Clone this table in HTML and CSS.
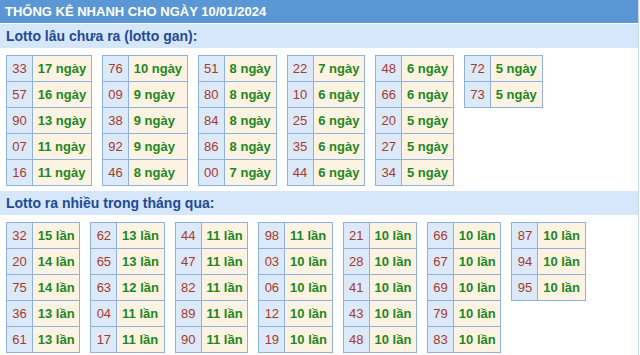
FILE: index.html
```html
<!DOCTYPE html>
<html lang="vi">
<head>
<meta charset="utf-8">
<title>Thống kê nhanh</title>
<link rel="stylesheet" href="styles.css">
</head>
<body>
<div class="box">
  <div class="header">THỐNG KÊ NHANH CHO NGÀY 10/01/2024</div>

  <div class="section-title">Lotto lâu chưa ra (lotto gan):</div>
  <div class="tables first">
    <table class="stat"><tbody>
      <tr><td class="num">33</td><td class="val">17 ngày</td></tr>
      <tr><td class="num">57</td><td class="val">16 ngày</td></tr>
      <tr><td class="num">90</td><td class="val">13 ngày</td></tr>
      <tr><td class="num">07</td><td class="val">11 ngày</td></tr>
      <tr><td class="num">16</td><td class="val">11 ngày</td></tr>
    </tbody></table>
    <table class="stat"><tbody>
      <tr><td class="num">76</td><td class="val">10 ngày</td></tr>
      <tr><td class="num">09</td><td class="val">9 ngày</td></tr>
      <tr><td class="num">38</td><td class="val">9 ngày</td></tr>
      <tr><td class="num">92</td><td class="val">9 ngày</td></tr>
      <tr><td class="num">46</td><td class="val">8 ngày</td></tr>
    </tbody></table>
    <table class="stat"><tbody>
      <tr><td class="num">51</td><td class="val">8 ngày</td></tr>
      <tr><td class="num">80</td><td class="val">8 ngày</td></tr>
      <tr><td class="num">84</td><td class="val">8 ngày</td></tr>
      <tr><td class="num">86</td><td class="val">8 ngày</td></tr>
      <tr><td class="num">00</td><td class="val">7 ngày</td></tr>
    </tbody></table>
    <table class="stat"><tbody>
      <tr><td class="num">22</td><td class="val">7 ngày</td></tr>
      <tr><td class="num">10</td><td class="val">6 ngày</td></tr>
      <tr><td class="num">25</td><td class="val">6 ngày</td></tr>
      <tr><td class="num">35</td><td class="val">6 ngày</td></tr>
      <tr><td class="num">44</td><td class="val">6 ngày</td></tr>
    </tbody></table>
    <table class="stat"><tbody>
      <tr><td class="num">48</td><td class="val">6 ngày</td></tr>
      <tr><td class="num">66</td><td class="val">6 ngày</td></tr>
      <tr><td class="num">20</td><td class="val">5 ngày</td></tr>
      <tr><td class="num">27</td><td class="val">5 ngày</td></tr>
      <tr><td class="num">34</td><td class="val">5 ngày</td></tr>
    </tbody></table>
    <table class="stat"><tbody>
      <tr><td class="num">72</td><td class="val">5 ngày</td></tr>
      <tr><td class="num">73</td><td class="val">5 ngày</td></tr>
    </tbody></table>
  </div>

  <div class="section-title">Lotto ra nhiều trong tháng qua:</div>
  <div class="tables">
    <table class="stat"><tbody>
      <tr><td class="num">32</td><td class="val">15 lần</td></tr>
      <tr><td class="num">20</td><td class="val">14 lần</td></tr>
      <tr><td class="num">75</td><td class="val">14 lần</td></tr>
      <tr><td class="num">36</td><td class="val">13 lần</td></tr>
      <tr><td class="num">61</td><td class="val">13 lần</td></tr>
    </tbody></table>
    <table class="stat"><tbody>
      <tr><td class="num">62</td><td class="val">13 lần</td></tr>
      <tr><td class="num">65</td><td class="val">13 lần</td></tr>
      <tr><td class="num">63</td><td class="val">12 lần</td></tr>
      <tr><td class="num">04</td><td class="val">11 lần</td></tr>
      <tr><td class="num">17</td><td class="val">11 lần</td></tr>
    </tbody></table>
    <table class="stat"><tbody>
      <tr><td class="num">44</td><td class="val">11 lần</td></tr>
      <tr><td class="num">47</td><td class="val">11 lần</td></tr>
      <tr><td class="num">82</td><td class="val">11 lần</td></tr>
      <tr><td class="num">89</td><td class="val">11 lần</td></tr>
      <tr><td class="num">90</td><td class="val">11 lần</td></tr>
    </tbody></table>
    <table class="stat"><tbody>
      <tr><td class="num">98</td><td class="val">11 lần</td></tr>
      <tr><td class="num">03</td><td class="val">10 lần</td></tr>
      <tr><td class="num">06</td><td class="val">10 lần</td></tr>
      <tr><td class="num">12</td><td class="val">10 lần</td></tr>
      <tr><td class="num">19</td><td class="val">10 lần</td></tr>
    </tbody></table>
    <table class="stat"><tbody>
      <tr><td class="num">21</td><td class="val">10 lần</td></tr>
      <tr><td class="num">28</td><td class="val">10 lần</td></tr>
      <tr><td class="num">41</td><td class="val">10 lần</td></tr>
      <tr><td class="num">43</td><td class="val">10 lần</td></tr>
      <tr><td class="num">48</td><td class="val">10 lần</td></tr>
    </tbody></table>
    <table class="stat"><tbody>
      <tr><td class="num">66</td><td class="val">10 lần</td></tr>
      <tr><td class="num">67</td><td class="val">10 lần</td></tr>
      <tr><td class="num">69</td><td class="val">10 lần</td></tr>
      <tr><td class="num">79</td><td class="val">10 lần</td></tr>
      <tr><td class="num">83</td><td class="val">10 lần</td></tr>
    </tbody></table>
    <table class="stat"><tbody>
      <tr><td class="num">87</td><td class="val">10 lần</td></tr>
      <tr><td class="num">94</td><td class="val">10 lần</td></tr>
      <tr><td class="num">95</td><td class="val">10 lần</td></tr>
    </tbody></table>
  </div>
</div>
</body>
</html>
```

FILE: styles.css
```css
html, body {
  margin: 0;
  padding: 0;
  background: #ffffff;
}

body {
  font-family: "Liberation Sans", Arial, sans-serif;
}

.box {
  width: 638px;
  border-right: 1px solid #c9d9ec;
  min-height: 355px;
}

.header {
  height: 23px;
  line-height: 23px;
  padding-left: 5px;
  background: #5b97d4;
  color: #ffffff;
  font-size: 13px;
  font-weight: bold;
}

.section-title {
  margin-top: 1px;
  height: 24px;
  line-height: 24px;
  padding-left: 6px;
  background: #d6e7fb;
  color: #1f4b95;
  font-size: 14px;
  font-weight: bold;
}

.tables {
  display: flex;
  align-items: flex-start;
  gap: 10px;
  padding: 7px 6px 4px 6px;
}

.stat {
  border-collapse: collapse;
  font-size: 13px;
}

.stat td {
  height: 25px;
  padding: 0 4.75px;
  border: 1px solid #8eb1e0;
  white-space: nowrap;
}

.stat .num {
  background: #dce9f9;
  color: #a63a2a;
  text-align: center;
  width: 15.5px;
}

.stat .val {
  background: #fdf3e2;
  color: #1e871e;
  font-weight: bold;
}
```
